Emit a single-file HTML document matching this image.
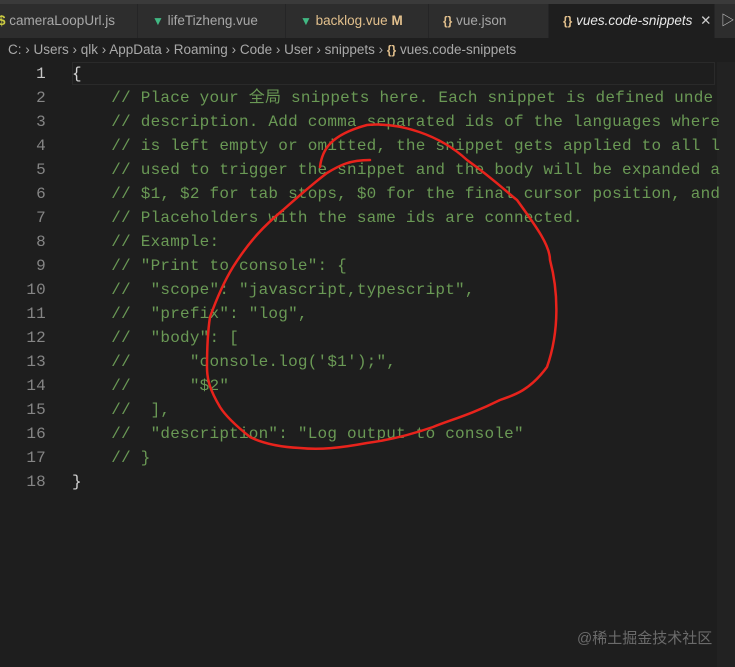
<!DOCTYPE html><html><head><meta charset="utf-8"><style>
body{margin:0;width:735px;height:667px;background:#1e1e1e;overflow:hidden;position:relative;font-family:"Liberation Sans","Noto Sans CJK SC",sans-serif}
.top{position:absolute;left:0;top:0;width:735px;height:4px;background:#3a3a3a}
.tabs{position:absolute;top:4px;left:0;width:735px;height:34px;background:#252526}
.tab{position:absolute;top:0;height:34px;background:#2d2d2d;border-right:1px solid #252526;color:#a8a8a8;font-size:13.5px;line-height:34px;white-space:nowrap;box-sizing:border-box;padding-left:8px}
.v{color:#41b883;font-weight:bold;font-size:12px}
.b{color:#e2c08d;font-weight:bold;font-size:12px}
.bc{position:absolute;top:38px;left:0;height:24px;line-height:24px;font-size:13.5px;color:#a9a9a9;padding-left:8px;white-space:nowrap}
.code{position:absolute;top:62px;left:0;font-family:"Liberation Mono","Noto Sans CJK SC",monospace;font-size:16px;letter-spacing:0.22px;line-height:24px;white-space:pre;color:#6a9955}
.ln{position:absolute;left:0;width:46px;text-align:right;color:#858585;font-size:16px}
.cl{position:absolute;left:72px}
</style></head><body>
<div class="top"></div>
<div class="tabs">
<div class="tab" style="left:-10px;width:148px;padding-left:8px"><span style="color:#cbcb41;font-weight:bold">$</span> cameraLoopUrl.js</div>
<div class="tab" style="left:138px;width:148px;padding-left:14px"><span class="v">▼</span> lifeTizheng.vue</div>
<div class="tab" style="left:286px;width:143px;padding-left:14px;color:#e2c08d"><span class="v">▼</span> backlog.vue <b>M</b></div>
<div class="tab" style="left:429px;width:120px;padding-left:14px"><span class="b">{}</span> vue.json</div>
<div class="tab" style="left:549px;width:166px;padding-left:14px;background:#1e1e1e;color:#e8e8e8;font-style:italic"><span class="b" style="font-style:normal">{}</span> vues.code-snippets <span style="font-style:normal;color:#ccc;margin-left:4px">✕</span></div>
<div class="tab" style="left:715px;width:30px;padding-left:6px;color:#ccc">▷</div>
</div>
<div class="bc">C: › Users › qlk › AppData › Roaming › Code › User › snippets › <span class="b">{}</span> vues.code-snippets</div>
<div style="position:absolute;left:72px;top:62px;width:643px;height:23px;border:1px solid #2a2a2a;box-sizing:border-box"></div>
<div style="position:absolute;left:717px;top:62px;width:18px;height:605px;background:#222"></div>
<div class="code">
<div class="ln" style="top:0;color:#c6c6c6">1</div><div class="cl" style="top:0;color:#d4d4d4">{</div>
<div class="ln" style="top:24px">2</div><div class="cl" style="top:24px">    // Place your 全局 snippets here. Each snippet is defined unde</div>
<div class="ln" style="top:48px">3</div><div class="cl" style="top:48px">    // description. Add comma separated ids of the languages where</div>
<div class="ln" style="top:72px">4</div><div class="cl" style="top:72px">    // is left empty or omitted, the snippet gets applied to all l</div>
<div class="ln" style="top:96px">5</div><div class="cl" style="top:96px">    // used to trigger the snippet and the body will be expanded a</div>
<div class="ln" style="top:120px">6</div><div class="cl" style="top:120px">    // $1, $2 for tab stops, $0 for the final cursor position, and</div>
<div class="ln" style="top:144px">7</div><div class="cl" style="top:144px">    // Placeholders with the same ids are connected.</div>
<div class="ln" style="top:168px">8</div><div class="cl" style="top:168px">    // Example:</div>
<div class="ln" style="top:192px">9</div><div class="cl" style="top:192px">    // "Print to console": {</div>
<div class="ln" style="top:216px">10</div><div class="cl" style="top:216px">    //  "scope": "javascript,typescript",</div>
<div class="ln" style="top:240px">11</div><div class="cl" style="top:240px">    //  "prefix": "log",</div>
<div class="ln" style="top:264px">12</div><div class="cl" style="top:264px">    //  "body": [</div>
<div class="ln" style="top:288px">13</div><div class="cl" style="top:288px">    //      "console.log('$1');",</div>
<div class="ln" style="top:312px">14</div><div class="cl" style="top:312px">    //      "$2"</div>
<div class="ln" style="top:336px">15</div><div class="cl" style="top:336px">    //  ],</div>
<div class="ln" style="top:360px">16</div><div class="cl" style="top:360px">    //  "description": "Log output to console"</div>
<div class="ln" style="top:384px">17</div><div class="cl" style="top:384px">    // }</div>
<div class="ln" style="top:408px">18</div><div class="cl" style="top:408px;color:#d4d4d4">}</div>
</div>
<svg style="position:absolute;left:0;top:0" width="735" height="667"><path d="M320 167 C322 150 330 135 367 125 C400 122 440 135 467 160 C495 180 510 195 517 200 C535 225 550 245 550 260 C558 290 560 330 547 367 C530 390 515 395 500 400 C470 415 450 420 433 427 C410 435 390 440 367 443 C340 448 320 450 300 448 C280 447 262 443 250 437 C235 425 225 415 220 407 C210 390 207 380 207 367 C207 345 208 330 210 317 C218 295 225 280 233 267 C250 240 265 225 283 210 C300 195 315 182 327 173 C340 165 350 160 370 160" fill="none" stroke="#e8231c" stroke-width="2.5" stroke-linecap="round"/></svg>
<div style="position:absolute;left:577px;top:627px;font-size:15px;color:#6b6b6b;font-family:'Liberation Sans','Noto Sans CJK SC',sans-serif">@稀土掘金技术社区</div>
</body></html>
